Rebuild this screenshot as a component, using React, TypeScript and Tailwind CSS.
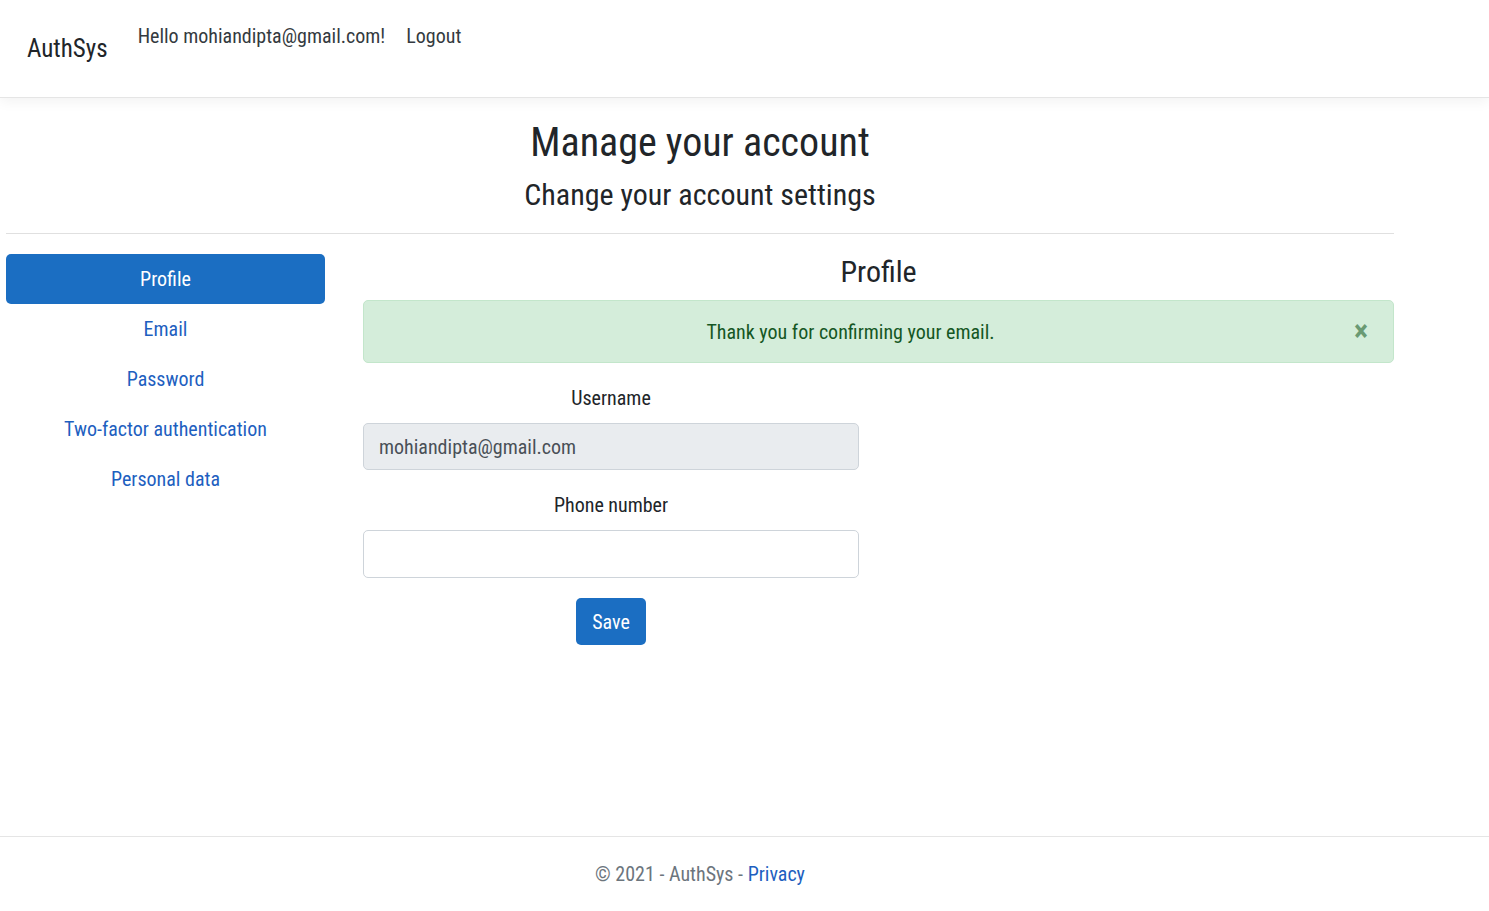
import React from "react";

export default function App() {
  const font = { fontFamily: "Roboto, 'Liberation Sans', sans-serif", fontStretch: "75%" } as React.CSSProperties;
  return (
    <div className="h-[911px] flex flex-col bg-white text-[#212529]" style={font}>
      <header className="h-[98px] border-b border-[#e5e5e5] shadow-[0_4px_12px_rgba(0,0,0,0.05)] flex items-start shrink-0">
        <a className="ml-[27px] mt-[34px] text-[25px] leading-[30px] text-[#212529]">AuthSys</a>
        <div className="flex mt-[21px] ml-[30px] text-[20px] leading-[30px] text-[#343a40]">
          <span>Hello mohiandipta@gmail.com!</span>
          <span className="ml-[21px]">Logout</span>
        </div>
      </header>
      <main className="ml-[6px] w-[1388px] flex-1">
        <div className="text-center pt-[21px]">
          <h1 className="text-[40px] leading-[48px] text-[#212529]">Manage your account</h1>
          <h2 className="text-[30px] leading-[36px] mt-[10px] text-[#212529]">Change your account settings</h2>
        </div>
        <hr className="mt-[20px] border-t border-[#e0e0e0]" />
        <div className="flex gap-[38px] mt-[20px]">
          <nav className="w-[319px] flex flex-col text-[20px] leading-[30px] text-center">
            <a className="h-[50px] flex items-center justify-center rounded-[5px] bg-[#1b6ec2] text-white">Profile</a>
            <a className="h-[50px] flex items-center justify-center text-[#1e5fbf]">Email</a>
            <a className="h-[50px] flex items-center justify-center text-[#1e5fbf]">Password</a>
            <a className="h-[50px] flex items-center justify-center text-[#1e5fbf]">Two-factor authentication</a>
            <a className="h-[50px] flex items-center justify-center text-[#1e5fbf]">Personal data</a>
          </nav>
          <section className="flex-1">
            <h3 className="text-center text-[30px] leading-[36px]">Profile</h3>
            <div className="mt-[10px] h-[63px] rounded-[5px] border border-[#c3e6cb] bg-[#d4edda] text-[#155724] text-[20px] flex items-center relative">
              <span className="w-full text-center pr-[56px]">Thank you for confirming your email.</span>
              <span className="absolute right-[25px] top-[14px] text-[#6a9a73] text-[30px] font-bold leading-[32px]">×</span>
            </div>
            <div className="w-[496px] mt-[20px] text-[20px] text-center">
              <label className="block leading-[30px] text-[#212529]">Username</label>
              <div className="mt-[10px] h-[47px] rounded-[5px] border border-[#ced4da] bg-[#e9ecef] text-left px-[15px] flex items-center text-[#495057]">mohiandipta@gmail.com</div>
              <label className="block leading-[30px] mt-[20px] text-[#212529]">Phone number</label>
              <div className="mt-[10px] h-[48px] rounded-[5px] border border-[#ced4da] bg-white"></div>
              <button className="mt-[20px] h-[47px] w-[70px] rounded-[5px] bg-[#1b6ec2] text-white text-[20px]">Save</button>
            </div>
          </section>
        </div>
      </main>
      <footer className="h-[75px] border-t border-[#e5e5e5] shrink-0">
        <div className="ml-[6px] w-[1388px] text-center text-[20px] text-[#6c757d] pt-[22px] leading-[30px]">
          © 2021 - AuthSys - <a className="text-[#1e5fbf]">Privacy</a>
        </div>
      </footer>
    </div>
  );
}
